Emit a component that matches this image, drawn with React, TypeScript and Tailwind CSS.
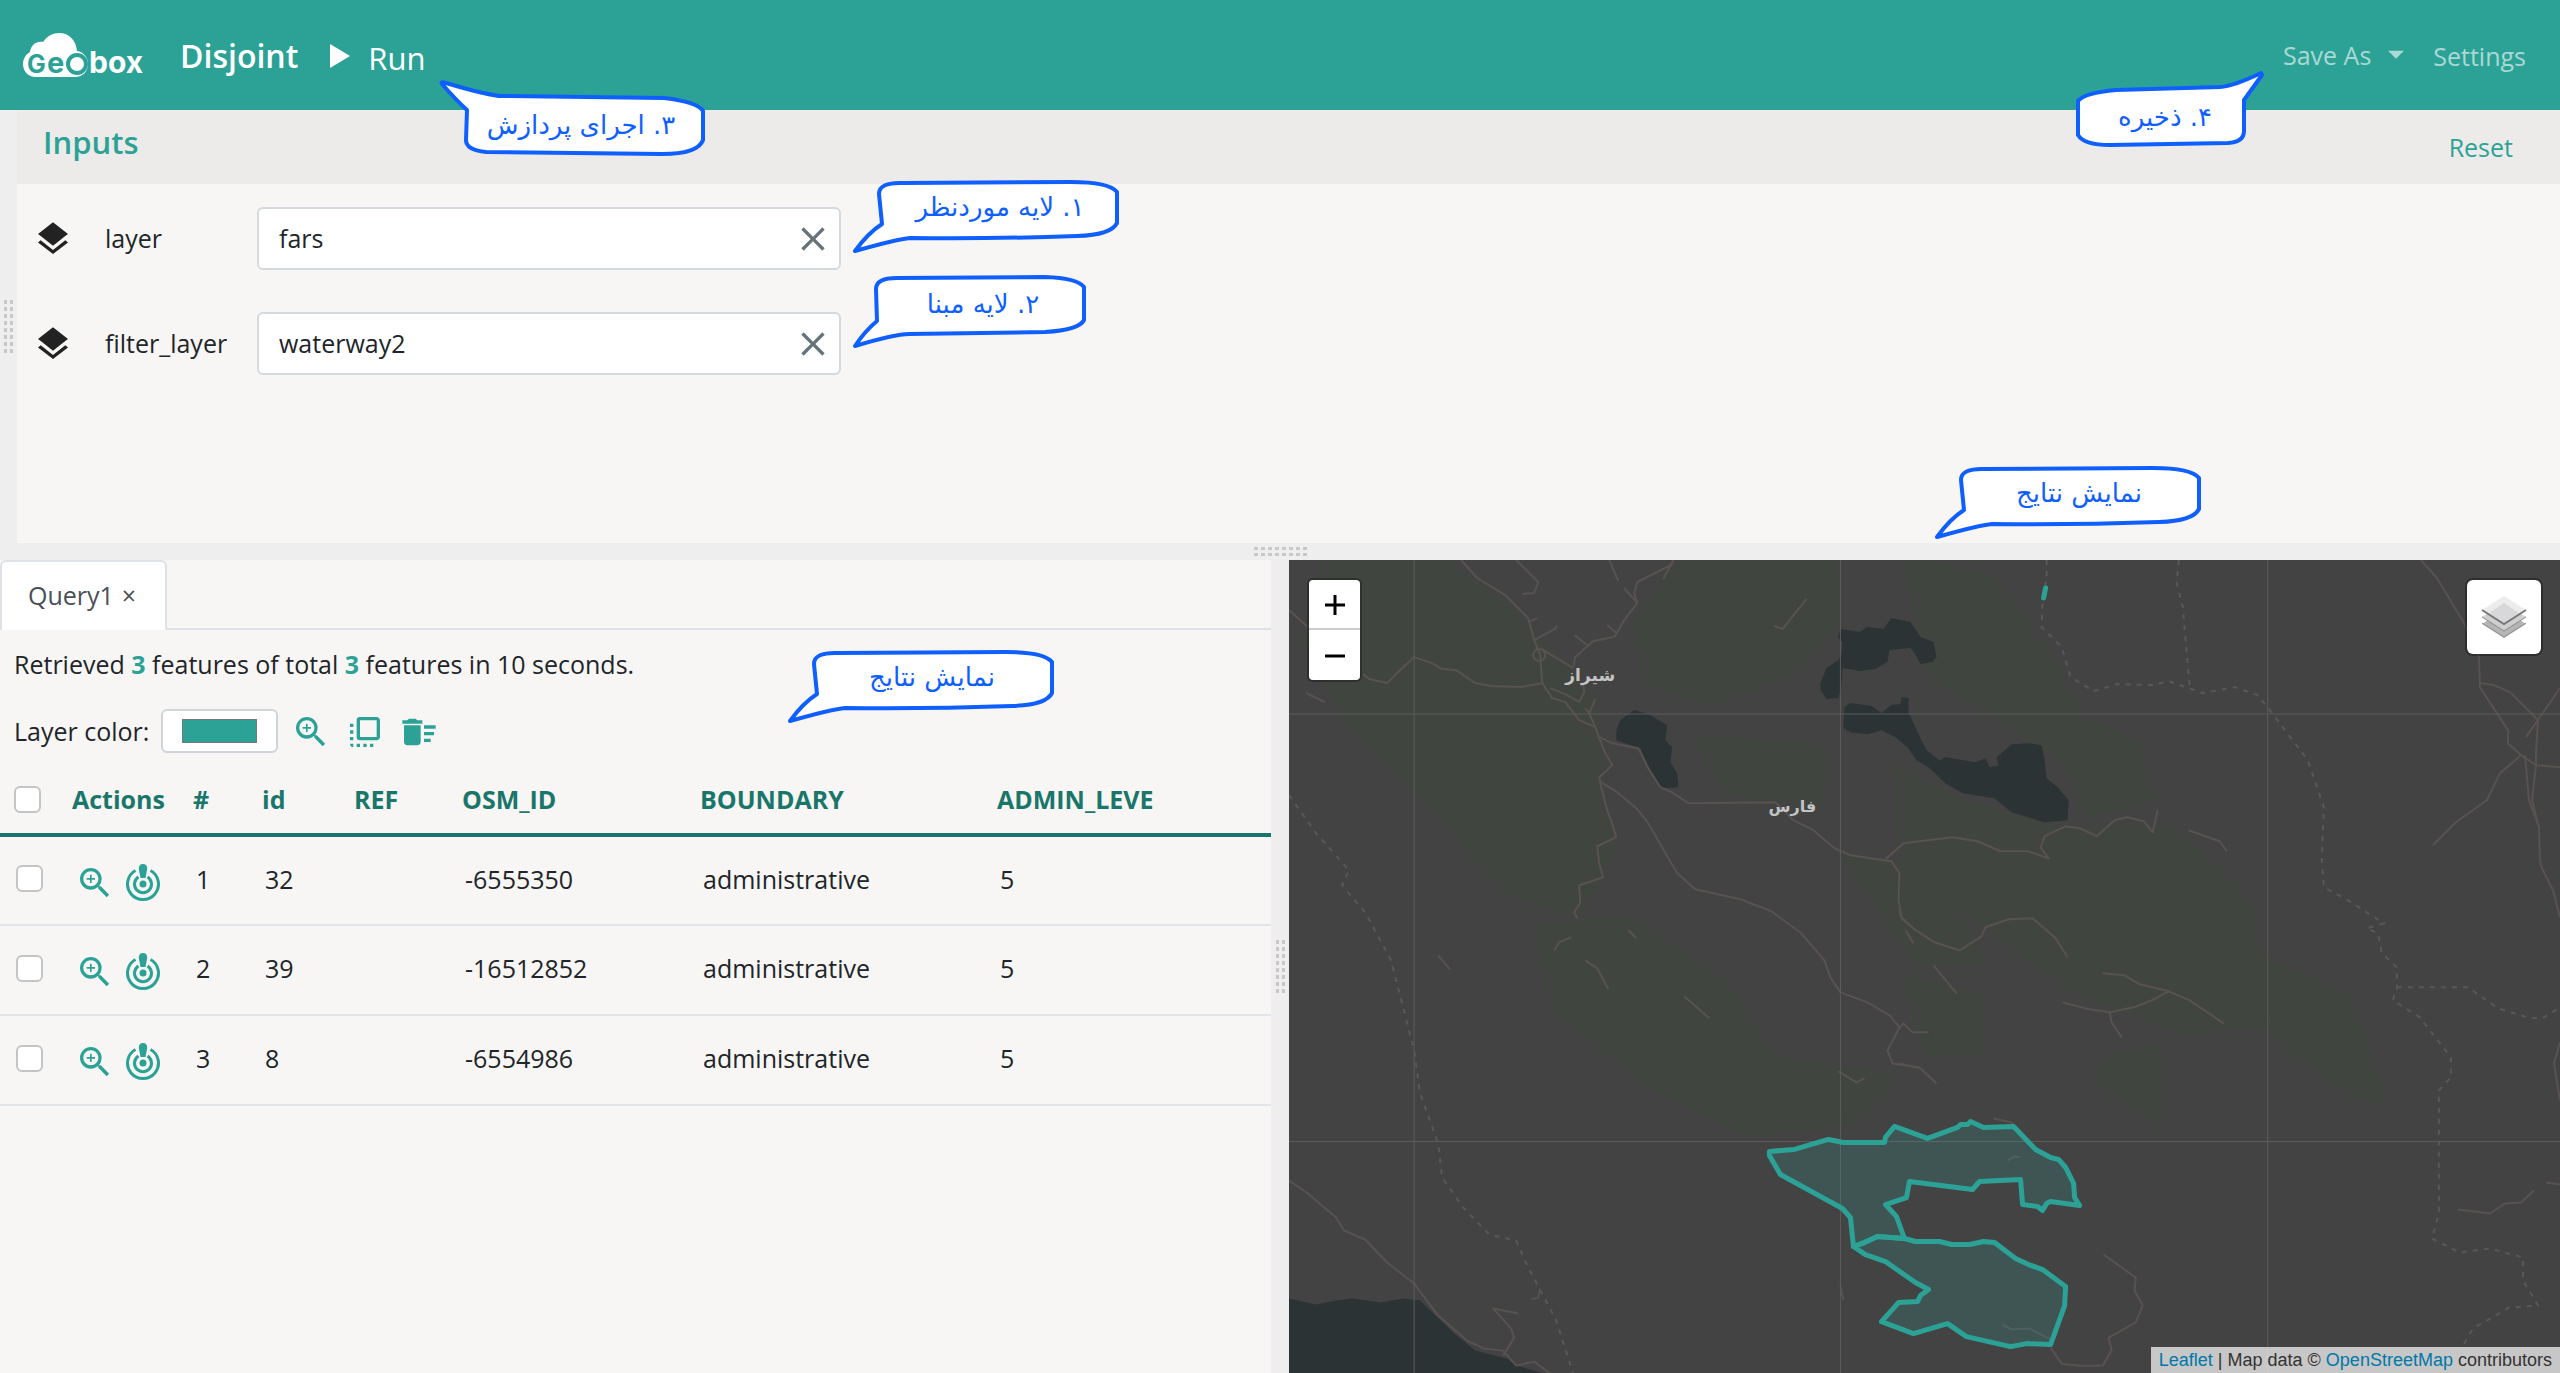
import { useState } from "react";
import {
  MdArrowDropDown,
  MdClose,
  MdDeleteSweep,
  MdFlipToFront,
  MdLayers,
  MdZoomIn,
} from "react-icons/md";

interface Feature {
  index: number;
  id: number;
  ref: string;
  osmId: string;
  boundary: string;
  adminLevel: string;
}

const features: Feature[] = [
  { index: 1, id: 32, ref: "", osmId: "-6555350", boundary: "administrative", adminLevel: "5" },
  { index: 2, id: 39, ref: "", osmId: "-16512852", boundary: "administrative", adminLevel: "5" },
  { index: 3, id: 8, ref: "", osmId: "-6554986", boundary: "administrative", adminLevel: "5" },
];

const columns = ["Actions", "#", "id", "REF", "OSM_ID", "BOUNDARY", "ADMIN_LEVE"];

const roads = [
  "172,0 188,18 216,35 239,58 245,80 251,95 253,123 263,138 276,142 290,160 306,167",
  "227,0 249,22 245,33 233,34",
  "384,0 382,5 348,22 345,33 348,43 335,60 325,77 304,81 286,97 284,107",
  "384,0 374,19",
  "320,0 329,21",
  "335,28 348,43",
  "0,50 19,67",
  "74,114 80,119 98,123 108,113 125,97 143,103 153,109 167,110 186,123 202,126 231,127 253,123",
  "17,133 36,142",
  "245,80 267,68 267,65",
  "239,62 248,58",
  "251,88 284,108",
  "285,75 298,85",
  "318,65 327,73",
  "261,128 276,134 290,142 295,132 294,125",
  "306,139 300,153 296,148",
  "300,153 306,167 310,178 316,193 323,205 310,217 312,227 318,250 324,267 327,277 308,286 310,303 314,317 290,325 291,343 285,352 288,358",
  "310,177 323,183 349,188 359,208 371,227 382,232 399,243 486,242 504,260 524,270 545,288 561,295 602,301 610,313 609,340 612,357 626,370",
  "616,370 624,383",
  "596,299 614,283 630,281 663,277 688,281 711,291 738,291 759,298 751,287 755,276 776,266 790,268 807,276 825,260 837,257 854,261 863,272 868,250",
  "899,270 930,281 937,291",
  "610,350 612,358 625,369 645,382 670,390 692,376 696,367 719,359 743,358 766,378 778,397",
  "644,405 667,433",
  "813,413 835,415 850,424 879,431 900,440 934,463",
  "773,442 800,449 820,452 844,447 862,440 879,431",
  "820,452 822,462 832,477",
  "610,467 614,463 623,472 639,472",
  "610,503 631,508 647,523",
  "310,221 328,232 347,248 359,263 382,303 388,313 406,329 451,339 482,351 512,373 535,400 541,417 551,432 578,442 600,455 610,467 598,490 603,503 630,507",
  "485,66 493,69 517,39",
  "265,390 270,382 282,377",
  "339,370 347,378",
  "149,395 161,409",
  "296,400 308,408 319,429",
  "395,436 420,458",
  "549,511 567,522 575,518",
  "0,620 19,633 47,657 55,670 76,679 98,702 125,723 149,755 178,780 195,788 214,790 227,805 245,801 261,813",
  "214,795 225,777 222,768 204,748 229,753",
  "242,739 249,737 251,728",
  "1131,0 1147,18 1174,63 1189,97 1190,127 1218,170 1218,183 1231,195 1210,213 1197,240 1166,262 1143,285",
  "1190,123 1204,125 1220,132 1248,160 1246,193 1246,205 1270,207",
  "1231,195 1246,205",
  "1270,128 1236,177",
  "1235,195 1239,240 1249,267 1250,300 1252,308 1263,330 1270,357",
  "1246,205 1242,240 1249,267",
  "1270,482 1264,503 1270,540",
  "814,694 846,717 845,730 853,745 846,762 819,777 822,790 813,805 790,805 772,803 761,787",
  "1168,649 1200,653 1215,643 1231,642 1244,630",
  "1256,622 1270,624",
  "704,558 722,562 728,570",
  "713,764 722,769 740,768 761,779",
  "718,600 725,596 730,597",
  "551,726 554,740",
];

const borders = [
  "0,235 27,273 60,310 53,325 76,352 102,400 125,490 131,533 149,583 153,617 174,647 200,674 227,680 237,703 267,760 284,813",
  "757,0 757,17 753,40 752,67 772,87 781,117 804,131 827,124 863,125 879,121 913,133 945,127 968,135 980,150 1018,200 1034,247 1032,300 1034,327 1058,340 1094,363 1077,368 1088,373 1092,393 1107,407 1107,427 1103,440 1130,457 1161,497 1161,517 1149,530 1149,653 1142,678 1170,692 1200,688 1233,697 1233,720 1248,745 1219,747 1183,768 1172,787",
  "1107,427 1178,427 1208,448 1241,458 1254,457 1270,447",
  "889,0 887,23 893,47 900,127",
];

const lakes = [
  "345,150 361,155 378,165 376,180 383,187 381,202 388,213 389,227 371,228 361,210 351,188 327,180 327,170 331,160",
  "531,123 537,108 549,100 552,95 553,82 548,77 552,69 570,72 578,67 594,69 602,58 621,62 631,77 644,82 647,97 643,102 631,104 625,93 621,88 600,90 598,102 586,109 570,111 553,108 552,127 549,138 537,139 531,130",
  "555,147 561,143 582,146 592,153 602,145 611,144 612,137 619,138 619,152 631,178 637,190 650,200 656,197 686,202 696,198 700,207 709,205 707,197 722,184 738,183 752,185 755,200 757,218 768,227 779,240 778,260 755,262 722,252 705,238 673,233 656,223 639,207 627,200 618,187 606,177 592,170 578,174 561,172 554,168",
  "0,738 27,744 47,740 63,738 92,742 114,738 131,740 165,773 186,790 218,798 227,805 256,813 0,813",
];

const woods = [
  "40,0 150,0 230,60 300,140 310,220 320,290 290,350 220,330 150,250 60,160 20,80",
  "400,0 540,0 545,60 500,110 420,140 360,120 350,60",
  "620,0 700,20 760,100 790,160 850,190 860,240 800,250 780,200 700,150 640,110",
  "610,210 660,240 760,270 880,270 950,330 970,400 1060,440 1090,540 1060,530 970,460 900,470 790,430 720,380 620,300",
  "250,370 340,360 440,430 480,500 600,520 560,560 460,570 360,520 270,450",
  "620,420 690,440 690,490 640,490",
  "820,500 870,490 870,560 810,520",
  "560,300 640,310 690,400 630,400",
  "410,180 540,190 530,240 440,230",
];

const selected = [
  "480,591 505,589 539,579 554,582 595,582 596,577 605,566 638,578 668,567 671,564 678,564 681,561 694,567 724,566 746,589 761,597 769,599 776,607 784,623 785,637 790,645 761,641 757,643 753,650 748,646 733,644 731,619 690,621 683,629 620,621 617,637 596,644 607,656 615,678 588,676 575,682 564,686 561,657 553,648 491,614 480,595",
  "564,686 575,682 588,676 615,678 626,681 650,681 662,684 680,684 694,681 705,682 726,698 739,704 753,709 776,726 775,745 761,784 737,783 721,786 677,776 658,763 624,773 592,761 609,742 628,741 631,735 639,729 626,722 596,701 576,694",
];

function Logo() {
  return (
    <svg width="122" height="48" viewBox="0 0 122 48" className="overflow-visible" role="img" aria-label="Geobox">
      <path
        d="M14 45 C6 45 1 39 1 32 C1 27 4 22 8 20 C9 13 14 9 21 10 C25 4 31 1 37 1 C47 1 54 8 55 19 C62 20 66 26 66 32 C66 39 61 45 53 45 Z"
        fill="#fff"
      />
      <circle cx="55" cy="32" r="9" fill="#fff" stroke="#2ca296" strokeWidth="4" />
      <g fontFamily="Inter, sans-serif" fontWeight="700">
        <text x="5" y="41" fontSize="25" fill="#2ca296">
          G
        </text>
        <text x="25" y="41" fontSize="29" fill="#2ca296">
          e
        </text>
        <text x="67" y="41" fontSize="30" fill="#fff">
          box
        </text>
      </g>
    </svg>
  );
}

function TargetIcon() {
  return (
    <svg width="36" height="40" viewBox="0 0 36 40" fill="none" stroke="currentColor" strokeWidth="3">
      <path d="M25.500 7.500 A15.500 15.500 0 1 1 10.500 7.500" />
      <path d="M22.500 14 A8.500 8.500 0 1 1 13.500 14" />
      <circle cx="18" cy="21" r="3.500" fill="currentColor" stroke="none" />
      <path
        d="M18 1 C21 1 22.500 3 22.200 6 L20.500 15 H15.500 L13.800 6 C13.500 3 15 1 18 1 Z"
        fill="currentColor"
        stroke="none"
      />
    </svg>
  );
}

function Grip({ vertical }: { vertical?: boolean }) {
  return (
    <div className={vertical ? "grid grid-cols-2 gap-[3px]" : "grid grid-cols-8 gap-[3px]"}>
      {Array.from({ length: 16 }, (_, i) => (
        <span key={i} className={vertical ? "h-1 w-[3px] bg-[#c8c8c8]" : "h-[3px] w-1 bg-[#c8c8c8]"} />
      ))}
    </div>
  );
}

interface CalloutProps {
  className: string;
  width: number;
  height: number;
  path: string;
  text: string;
  x: number;
  y: number;
}

function Callout({ className, width, height, path, text, x, y }: CalloutProps) {
  return (
    <svg className={`absolute z-10 overflow-visible ${className}`} width={width} height={height}>
      <path d={path} fill="#fff" stroke="#0f5fff" strokeWidth="4" strokeLinejoin="round" />
      <text
        x={x}
        y={y}
        direction="rtl"
        textAnchor="middle"
        fontFamily="'DejaVu Sans', sans-serif"
        fontSize="26"
        fill="#0f5fff"
      >
        {text}
      </text>
    </svg>
  );
}

const wideBubble =
  "M2 71 Q15 53 29 44 L26 14 Q26 2 50 3 L218 2 Q256 2 264 12 V43 Q258 55 224 56 Q140 59 57 58 Q45 59 2 71 Z";

function LayerInput({ name, initial }: { name: string; initial: string }) {
  const [value, setValue] = useState(initial);

  return (
    <div className="flex h-[63px] items-center">
      <MdLayers size={40} className="ml-4 shrink-0 text-[#222]" />
      <label htmlFor={name} className="ml-8 w-[152px]">
        {name}
      </label>
      <div className="flex h-full w-[584px] items-center rounded-md border-2 border-[#d3d9de] bg-white">
        <input
          id={name}
          value={value}
          onChange={(e) => setValue(e.target.value)}
          className="min-w-0 flex-1 bg-transparent pl-5 outline-none"
        />
        <button aria-label={`Clear ${name}`} onClick={() => setValue("")} className="mr-1.5 text-[#66737a]">
          <MdClose size={40} />
        </button>
      </div>
    </div>
  );
}

function Checkbox({ label }: { label: string }) {
  return (
    <input
      type="checkbox"
      aria-label={label}
      className="block size-[27px] appearance-none rounded-md border-2 border-[#c4c4c4] bg-white checked:bg-[#2ca296]"
    />
  );
}

function ResultsPanel() {
  const [color, setColor] = useState("#2ca296");

  return (
    <section className="min-w-0 overflow-hidden bg-[#f7f6f4]">
      <div className="flex h-[70px] border-b-2 border-[#dee2e6]">
        <div className="flex h-[70px] w-[167px] items-center rounded-t-md border-2 border-b-0 border-[#dee2e6] bg-white pl-[26px] text-[#495057]">
          Query1
          <button aria-label="Close Query1" className="ml-2 text-[25px]">
            ×
          </button>
        </div>
      </div>

      <p className="mt-4 pl-3.5 leading-9">
        Retrieved <b className="text-[#2ca296]">3</b> features of total <b className="text-[#2ca296]">3</b> features in 10
        seconds.
      </p>

      <div className="mt-[27px] flex h-[44px] items-center pl-3.5">
        <label htmlFor="layer-color" className="w-[147px] pt-0.5">
          Layer color:
        </label>
        <input
          id="layer-color"
          type="color"
          value={color}
          onChange={(e) => setColor(e.target.value)}
          className="h-[44px] w-[117px] appearance-none rounded-md border-2 border-[#ced4da] bg-white px-[19px] py-2 [&::-webkit-color-swatch]:rounded-none [&::-webkit-color-swatch]:border-[#777] [&::-webkit-color-swatch-wrapper]:p-0"
        />
        <div className="ml-[13px] flex gap-3.5 pt-0.5 text-[#2ca296]">
          <button aria-label="Zoom to layer">
            <MdZoomIn size={40} />
          </button>
          <button aria-label="Bring to front">
            <MdFlipToFront size={40} />
          </button>
          <button aria-label="Clear layer">
            <MdDeleteSweep size={40} />
          </button>
        </div>
      </div>

      <table className="mt-3 w-full table-fixed border-collapse text-left">
        <colgroup>
          <col className="w-[70px]" />
          <col className="w-[121px]" />
          <col className="w-[69px]" />
          <col className="w-[92px]" />
          <col className="w-[108px]" />
          <col className="w-[238px]" />
          <col className="w-[297px]" />
          <col />
        </colgroup>
        <thead>
          <tr className="h-[70px] border-b-4 border-[#1a766b] text-[#1a766b]">
            <th className="pl-3.5">
              <Checkbox label="Select all" />
            </th>
            {columns.map((column) => (
              <th key={column} className="pt-0.5 pl-0.5 font-bold">
                {column}
              </th>
            ))}
          </tr>
        </thead>
        <tbody>
          {features.map((feature) => (
            <tr key={feature.index} className="h-[90px] border-b-2 border-[#e1e4e8]">
              <td className="pb-1 pl-4">
                <Checkbox label={`Select feature ${feature.index}`} />
              </td>
              <td className="pt-1 pl-[5px]">
                <div className="flex items-center gap-2.5 text-[#2ca296]">
                  <button aria-label="Zoom to feature">
                    <MdZoomIn size={40} />
                  </button>
                  <button aria-label="Highlight feature">
                    <TargetIcon />
                  </button>
                </div>
              </td>
              <td className="pb-0.5 pl-[5px]">{feature.index}</td>
              <td className="pb-0.5 pl-[5px]">{feature.id}</td>
              <td className="pb-0.5 pl-[5px]">{feature.ref}</td>
              <td className="pb-0.5 pl-[5px]">{feature.osmId}</td>
              <td className="pb-0.5 pl-[5px]">{feature.boundary}</td>
              <td className="pb-0.5 pl-[5px]">{feature.adminLevel}</td>
            </tr>
          ))}
        </tbody>
      </table>
    </section>
  );
}

function MapPanel() {
  return (
    <section className="relative min-w-0 overflow-hidden bg-[#434343]">
      <svg className="absolute inset-0 size-full" viewBox="0 0 1270 813" preserveAspectRatio="xMinYMin slice">
        <g fill="#41453f" stroke="#41453f" strokeWidth="12" strokeLinejoin="round">
          {woods.map((points) => (
            <polygon key={points} points={points} />
          ))}
        </g>
        <g fill="#2c3334">
          {lakes.map((points) => (
            <polygon key={points} points={points} />
          ))}
        </g>
        <g fill="none" stroke="#585251" strokeWidth="2" strokeLinejoin="round">
          {roads.map((points) => (
            <polyline key={points} points={points} />
          ))}
          <circle cx="250" cy="95" r="6" />
        </g>
        <g fill="none" stroke="#585858" strokeWidth="2" strokeDasharray="5 6">
          {borders.map((points) => (
            <polyline key={points} points={points} />
          ))}
        </g>
        <path d="M125 0 V813 M551 0 V813 M978 0 V813 M0 154 H1270 M0 581 H1270" stroke="#5c5c5c" strokeWidth="1" />
        <g fill="#c4c4c4" fontFamily="'DejaVu Sans', sans-serif" fontWeight="700" textAnchor="middle">
          <text x="301" y="121" fontSize="17">
            شیراز
          </text>
          <text x="503" y="252" fontSize="16">
            فارس
          </text>
        </g>
        <g fill="#2ca296" fillOpacity="0.2" stroke="#2ca296" strokeWidth="5" strokeLinejoin="round">
          {selected.map((points) => (
            <polygon key={points} points={points} />
          ))}
        </g>
        <path d="M756 28 L754 38" stroke="#2ca296" strokeWidth="5" strokeLinecap="round" />
      </svg>

      <div className="absolute top-5 left-5 flex w-[51px] flex-col rounded-sm bg-white text-black shadow-[0_0_0_2px_rgba(0,0,0,0.3)]">
        <button aria-label="Zoom in" className="flex h-[50px] items-center justify-center border-b-2 border-[#ccc]">
          <svg width="22" height="22" stroke="currentColor" strokeWidth="3">
            <path d="M1 12 H21 M11 2 V22" />
          </svg>
        </button>
        <button aria-label="Zoom out" className="flex h-[50px] items-center justify-center">
          <svg width="22" height="22" stroke="currentColor" strokeWidth="3">
            <path d="M1 12 H21" />
          </svg>
        </button>
      </div>

      <button
        aria-label="Layers"
        className="absolute top-5 right-[19px] flex h-[74px] w-[74px] items-center justify-center rounded-md bg-white shadow-[0_0_0_2px_rgba(0,0,0,0.3)]"
      >
        <svg width="46" height="44" viewBox="0 0 46 44">
          <path d="M1 29 L23 15 L45 29 L23 43 Z" fill="#b5b5b5" />
          <path d="M1 28 L23 42 L45 28" fill="none" stroke="#909090" />
          <path d="M1 22 L23 8 L45 22 L23 36 Z" fill="#cfcfcf" />
          <path d="M1 22 L23 36 L45 22" fill="none" stroke="#8a8a8a" />
          <path d="M1 15 L23 1 L45 15 L23 29 Z" fill="#ececec" />
          <path d="M8 18 L23 8 L38 18 L23 28 Z" fill="#d8d8da" />
          <path d="M1 15 L23 29 L45 15" fill="none" stroke="#777" strokeWidth="2" />
        </svg>
      </button>

      <div className="absolute right-0 bottom-0 bg-white/70 px-2 font-['Liberation_Sans',sans-serif] text-[18px] leading-[26px] text-[#333]">
        <a href="#leaflet" className="text-[#0078a8]">
          Leaflet
        </a>{" "}
        | Map data ©{" "}
        <a href="#osm" className="text-[#0078a8]">
          OpenStreetMap
        </a>{" "}
        contributors
      </div>
    </section>
  );
}

function App() {
  return (
    <div className="relative flex min-h-screen flex-col overflow-hidden bg-[#eee] font-['Open_Sans',sans-serif] text-[25px] text-[#212529]">
      <header className="flex h-[110px] items-center bg-[#2ca296] pt-0.5 pr-[34px] pl-[22px] text-white">
        <Logo />
        <h1 className="ml-9 text-[32px] font-semibold">Disjoint</h1>
        <button className="ml-8 flex items-center gap-[18px] text-[31px]">
          <svg width="20" height="24" fill="currentColor">
            <path d="M0 0 L20 12 L0 24 Z" />
          </svg>
          <span className="pt-1">Run</span>
        </button>
        <nav className="ml-auto flex items-center gap-[18px] text-white/60">
          <button className="flex items-center gap-1.5">
            Save As
            <MdArrowDropDown size={38} className="mb-1" />
          </button>
          <a href="#settings" className="pt-0.5">
            Settings
          </a>
        </nav>
      </header>

      <div className="flex h-[433px]">
        <div className="flex w-[17px] items-center justify-center">
          <Grip vertical />
        </div>
        <section className="flex-1 bg-[#f7f6f4]">
          <div className="flex h-[74px] items-center justify-between bg-[#ecebea] pr-[47px] pl-[26px] text-[#2ca296]">
            <h2 className="pb-2.5 text-[31px] font-semibold">Inputs</h2>
            <button className="pt-0.5">Reset</button>
          </div>
          <div className="flex flex-col gap-[42px] pt-[23px]">
            <LayerInput name="layer" initial="fars" />
            <LayerInput name="filter_layer" initial="waterway2" />
          </div>
        </section>
      </div>

      <div className="flex h-[17px] items-center justify-center">
        <Grip />
      </div>

      <div className="grid flex-1 grid-cols-[1fr_18px_1fr]">
        <ResultsPanel />
        <div className="flex items-center justify-center">
          <Grip vertical />
        </div>
        <MapPanel />
      </div>

      <Callout
        className="top-[80px] left-[440px]"
        width={265}
        height={76}
        path="M2 4 Q0 1 6 3 Q50 16 62 16 L224 18 Q258 22 263 31 V60 Q258 74 222 74 L46 72 Q26 70 26 60 L27 30 Q16 20 2 4 Z"
        text="۳. اجرای پردازش"
        x={141}
        y={54}
      />
      <Callout
        className="top-[180px] left-[853px]"
        width={266}
        height={74}
        path={wideBubble}
        text="۱. لایه موردنظر"
        x={147}
        y={36}
      />
      <Callout
        className="top-[275px] left-[853px]"
        width={233}
        height={74}
        path="M2 71 Q12 56 24 46 L23 14 Q23 3 44 3 L192 2 Q224 3 231 12 V45 Q226 55 192 57 L56 59 Q42 59 2 71 Z"
        text="۲. لایه مبنا"
        x={130}
        y={38}
      />
      <Callout
        className="top-[71px] right-[296px]"
        width={188}
        height={76}
        path="M185 2 Q158 15 144 16 L40 19 Q8 22 2 30 V64 Q8 74 34 74 L152 72 Q168 71 168 60 V29 Q176 18 186 4 Z"
        text="۴. ذخیره"
        x={89}
        y={55}
      />
      <Callout
        className="top-[466px] right-[359px]"
        width={266}
        height={74}
        path={wideBubble}
        text="نمایش نتایج"
        x={144}
        y={36}
      />
      <Callout
        className="top-[650px] left-[788px]"
        width={266}
        height={74}
        path={wideBubble}
        text="نمایش نتایج"
        x={144}
        y={36}
      />
    </div>
  );
}

export default App;
